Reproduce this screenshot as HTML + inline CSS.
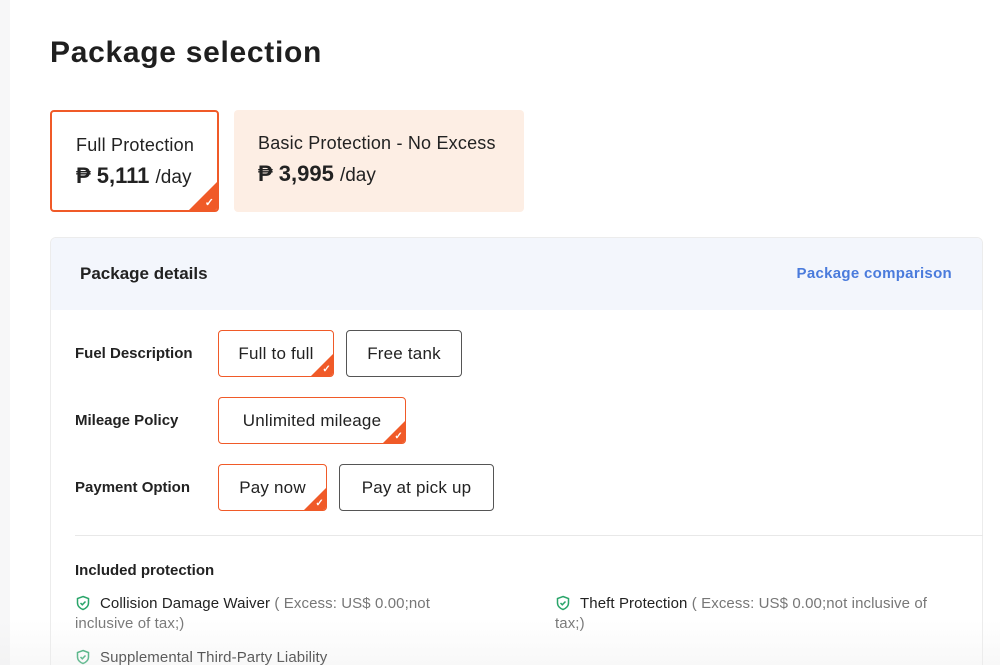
<!DOCTYPE html>
<html><head><meta charset="utf-8"><style>
*{box-sizing:border-box;margin:0;padding:0}
html,body{width:1000px;height:665px;overflow:hidden}
body{background:#fff;font-family:"Liberation Sans",Arial,sans-serif;color:#222;position:relative}
.strip{position:absolute;left:0;top:0;width:10px;height:665px;background:#f7f7f8}
h1{position:absolute;left:50px;top:36px;font-size:30px;font-weight:bold;letter-spacing:0.7px;color:#1f1f1f}
.pk{position:absolute;top:110px;height:102px;border-radius:4px}
.pk .t{position:absolute;left:24px;top:23px;font-size:18px;color:#222;letter-spacing:0.2px}
.pk .p{position:absolute;left:24px;top:51px;font-size:22px;font-weight:bold;color:#222}
.pk .p span{font-weight:normal;font-size:19px}
.sel{border:2px solid #f05a28;overflow:hidden}
.tri{position:absolute;right:0;bottom:0;width:0;height:0;border-style:solid}
.ck{position:absolute;right:3px;bottom:1px;color:#fff;font-size:11px;font-weight:bold;line-height:1}
.card{position:absolute;left:50px;top:237px;width:933px;height:440px;border:1px solid #ececec;border-radius:6px;overflow:hidden}
.hd{height:72px;background:#f3f6fc;position:relative}
.hd .a{position:absolute;left:29px;top:26px;font-size:17px;font-weight:bold;color:#222}
.hd .b{position:absolute;right:30px;top:27px;font-size:15px;font-weight:bold;color:#4a7bdc;letter-spacing:0.3px}
.lbl{position:absolute;left:75px;font-size:15px;font-weight:bold;color:#222}
.btn{position:absolute;height:47px;border:1px solid #555;border-radius:4px;font-size:17px;color:#222;display:flex;align-items:center;justify-content:center;overflow:hidden;letter-spacing:0.2px}
.btn.on{border-color:#f05a28}
.div{position:absolute;left:75px;top:535px;width:908px;height:1px;background:#e8e8e8}
.it{position:absolute;font-size:15px;color:#222;line-height:20px;letter-spacing:0.1px}
.it .g{color:#777}
.sh{display:inline-block;vertical-align:-3px;margin-right:9px}
.fade{position:absolute;left:0;top:620px;width:1000px;height:45px;background:linear-gradient(rgba(240,240,240,0),rgba(235,235,235,0.35))}
</style></head><body>
<div class="strip"></div>
<h1>Package selection</h1>
<div class="pk sel" style="left:50px;width:169px">
<div class="t">Full Protection</div>
<div class="p">₱ 5,111 <span>/day</span></div>
<div class="tri" style="border-width:0 0 28px 28px;border-color:transparent transparent #f05a28 transparent"></div><div class="ck">✓</div>
</div>
<div class="pk" style="left:234px;width:290px;background:#fdeee4">
<div class="t">Basic Protection - No Excess</div>
<div class="p">₱ 3,995 <span>/day</span></div>
</div>
<div class="card"><div class="hd"><div class="a">Package details</div><div class="b">Package comparison</div></div></div>
<div class="lbl" style="top:345px">Fuel Description</div>
<div class="lbl" style="top:412px">Mileage Policy</div>
<div class="lbl" style="top:479px">Payment Option</div>
<div class="btn on" style="left:218px;top:330px;width:116px">Full to full<div class="tri" style="border-width:0 0 22px 22px;border-color:transparent transparent #f05a28 transparent"></div><div class="ck" style="right:2px;bottom:1px;font-size:10px">✓</div></div>
<div class="btn" style="left:346px;top:330px;width:116px">Free tank</div>
<div class="btn on" style="left:218px;top:397px;width:188px">Unlimited mileage<div class="tri" style="border-width:0 0 22px 22px;border-color:transparent transparent #f05a28 transparent"></div><div class="ck" style="right:2px;bottom:1px;font-size:10px">✓</div></div>
<div class="btn on" style="left:218px;top:464px;width:109px">Pay now<div class="tri" style="border-width:0 0 22px 22px;border-color:transparent transparent #f05a28 transparent"></div><div class="ck" style="right:2px;bottom:1px;font-size:10px">✓</div></div>
<div class="btn" style="left:339px;top:464px;width:155px">Pay at pick up</div>
<div class="div"></div>
<div class="lbl" style="top:562px">Included protection</div>
<div class="it" style="left:75px;top:594px;width:390px"><svg class="sh" width="16" height="16" viewBox="0 0 16 16"><path d="M8 1.5 L13.5 3.5 V8 C13.5 11 11 13.5 8 14.5 C5 13.5 2.5 11 2.5 8 V3.5 Z" fill="none" stroke="#2aa56a" stroke-width="1.5"/><path d="M5.5 8 L7.3 9.8 L10.5 6.5" fill="none" stroke="#2aa56a" stroke-width="1.5"/></svg>Collision Damage Waiver <span class="g">( Excess: US$ 0.00;not inclusive of tax;)</span></div>
<div class="it" style="left:555px;top:594px;width:392px"><svg class="sh" width="16" height="16" viewBox="0 0 16 16"><path d="M8 1.5 L13.5 3.5 V8 C13.5 11 11 13.5 8 14.5 C5 13.5 2.5 11 2.5 8 V3.5 Z" fill="none" stroke="#2aa56a" stroke-width="1.5"/><path d="M5.5 8 L7.3 9.8 L10.5 6.5" fill="none" stroke="#2aa56a" stroke-width="1.5"/></svg>Theft Protection <span class="g">( Excess: US$ 0.00;not inclusive of tax;)</span></div>
<div class="it" style="left:75px;top:648px"><svg class="sh" width="16" height="16" viewBox="0 0 16 16"><path d="M8 1.5 L13.5 3.5 V8 C13.5 11 11 13.5 8 14.5 C5 13.5 2.5 11 2.5 8 V3.5 Z" fill="none" stroke="#2aa56a" stroke-width="1.5"/><path d="M5.5 8 L7.3 9.8 L10.5 6.5" fill="none" stroke="#2aa56a" stroke-width="1.5"/></svg>Supplemental Third-Party Liability</div>
<div class="fade"></div>
</body></html>
